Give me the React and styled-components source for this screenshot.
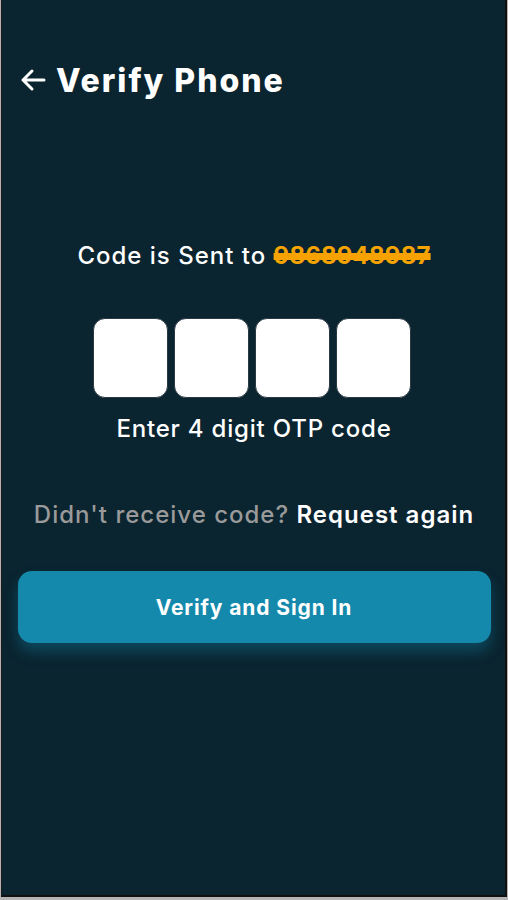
import styled, { createGlobalStyle } from 'styled-components';

const GlobalStyle = createGlobalStyle`
	html, body {
		margin: 0;
		padding: 0;
		background: #b4b4b4;
	}
	* {
		box-sizing: border-box;
	}
`;

const BackArrow = () => (
	<svg width="28" height="24" viewBox="0 0 28 24" fill="none">
		<path
			d="M25 12H4M13 3L4 12l9 9"
			stroke="#ffffff"
			strokeWidth="3"
			strokeLinecap="round"
			strokeLinejoin="round"
		/>
	</svg>
);

const App = () => {
	const digits = ['', '', '', ''];
	return (
		<>
			<GlobalStyle />
			<Frame>
				<Screen>
					<Header>
						<BackButton aria-label="back">
							<BackArrow />
						</BackButton>
						<Title>Verify Phone</Title>
					</Header>
					<Body>
						<SentText>
							Code is Sent to <Phone>9868948987</Phone>
						</SentText>
						<OtpRow>
							{digits.map((d, i) => (
								<OtpBox key={i} defaultValue={d} maxLength={1} />
							))}
						</OtpRow>
						<Hint>Enter 4 digit OTP code</Hint>
						<Resend>
							<span>Didn't receive code? </span>
							<ResendLink>Request again</ResendLink>
						</Resend>
						<VerifyBtn>Verify and Sign In</VerifyBtn>
					</Body>
				</Screen>
			</Frame>
		</>
	);
};

const Frame = styled.div`
	width: 508px;
	height: 900px;
	padding: 0 0 3px 1px;
`;
const Screen = styled.div`
	width: 506px;
	height: 897px;
	background: #0a2430;
	border-left: 1px solid #1a1a1a;
	border-right: 2px solid #111;
	border-bottom: 2px solid #111;
	font-family: Inter, 'Open Sans', sans-serif;
	color: #ffffff;
	display: flex;
	flex-direction: column;
`;
const Header = styled.div`
	display: flex;
	align-items: center;
	gap: 9px;
	padding: 60px 0 0 17px;
	height: 100px;
`;
const BackButton = styled.button`
	background: none;
	border: none;
	padding: 0;
	display: flex;
	cursor: pointer;
`;
const Title = styled.h1`
	margin: 0;
	font-size: 32px;
	font-weight: 800;
	letter-spacing: 2px;
`;
const Body = styled.div`
	display: flex;
	flex-direction: column;
	align-items: center;
	padding: 140px 16px 0 17px;
`;
const SentText = styled.p`
	margin: 0;
	font-size: 24px;
	font-weight: 500;
	line-height: 32px;
	letter-spacing: 1px;
`;
const Phone = styled.span`
	color: #f5a300;
	font-weight: 700;
	text-decoration: line-through;
	text-decoration-thickness: 7px;
	text-decoration-color: #f7a200;
	letter-spacing: 0.2px;
`;
const OtpRow = styled.div`
	display: flex;
	gap: 6px;
	margin: 46px 4px 0 0;
`;
const OtpBox = styled.input`
	width: 75px;
	height: 80px;
	border-radius: 12px;
	border: 1px solid #2a3a42;
	background: #ffffff;
	outline: none;
	text-align: center;
	font-size: 28px;
`;
const Hint = styled.p`
	margin: 15px 0 0;
	font-size: 24px;
	font-weight: 500;
	line-height: 32px;
	letter-spacing: 0.8px;
`;
const Resend = styled.p`
	margin: 54px 0 0;
	font-size: 24px;
	font-weight: 500;
	line-height: 32px;
	letter-spacing: 1px;
	span {
		color: #9a9a9a;
	}
`;
const ResendLink = styled.a`
	color: #ffffff;
	font-weight: 600;
	cursor: pointer;
`;
const VerifyBtn = styled.button`
	margin-top: 40px;
	width: 473px;
	height: 72px;
	border: none;
	border-radius: 14px;
	background: #1589ac;
	color: #ffffff;
	font-family: Inter, 'Open Sans', sans-serif;
	font-size: 21px;
	font-weight: 700;
	letter-spacing: 0.9px;
	box-shadow: 0 9px 14px rgba(21, 137, 172, 0.35);
	cursor: pointer;
`;

export default App;
